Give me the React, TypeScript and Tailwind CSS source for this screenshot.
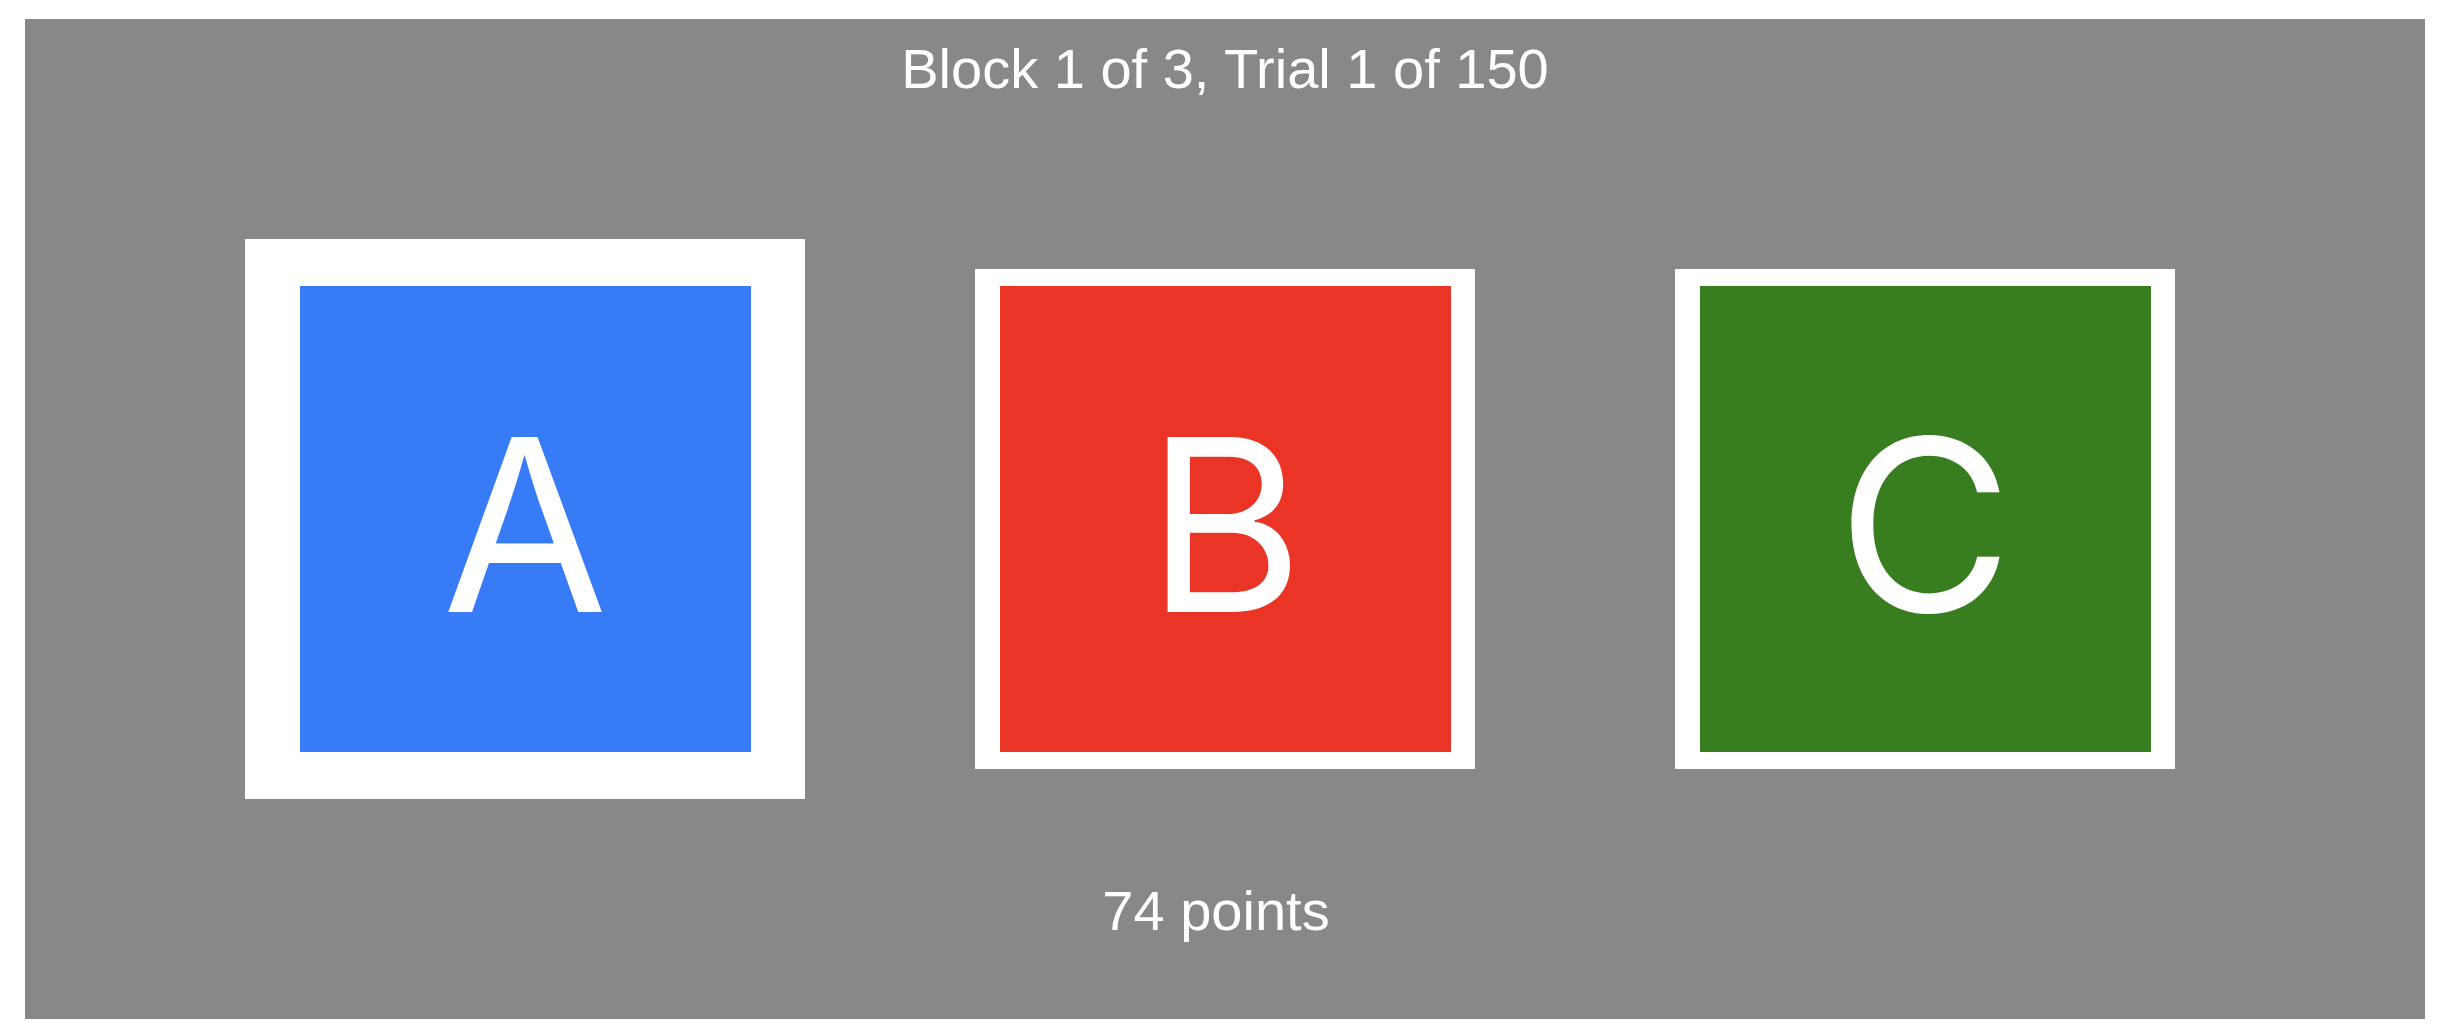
import React from "react";

const items = [
  { letter: "A", outer: "w-[560px] h-[560px]", color: "bg-[#377bf6]" },
  { letter: "B", outer: "w-[500px] h-[500px]", color: "bg-[#e93426]" },
  { letter: "C", outer: "w-[500px] h-[500px]", color: "bg-[#387e21]" },
];

export default function App() {
  return (
    <div className="w-[2450px] h-[1036px] bg-white pt-[19px] pl-[25px]">
      <div className="w-[2400px] h-[1000px] bg-[#888888] flex flex-col text-white font-['Liberation_Sans',Arial,sans-serif]">
        <div className="h-[140px] pt-[18px] text-center text-[56px] leading-[64px]">
          Block 1 of 3, Trial 1 of 150
        </div>
        <div className="h-[720px] flex items-center justify-center">
          {items.map((it) => (
            <div key={it.letter} className="w-[700px] flex items-center justify-center">
              <div className={`${it.outer} bg-white flex items-center justify-center`}>
                <div
                  className={`w-[451px] h-[466px] ${it.color} flex items-center justify-center pt-[12px] text-[240px] leading-none font-['Inter','Inter_Variable',Roboto,sans-serif]`}
                >
                  {it.letter}
                </div>
              </div>
            </div>
          ))}
        </div>
        <div className="h-[140px] pr-[18px] text-center text-[56px] leading-[64px]">74 points</div>
      </div>
    </div>
  );
}
